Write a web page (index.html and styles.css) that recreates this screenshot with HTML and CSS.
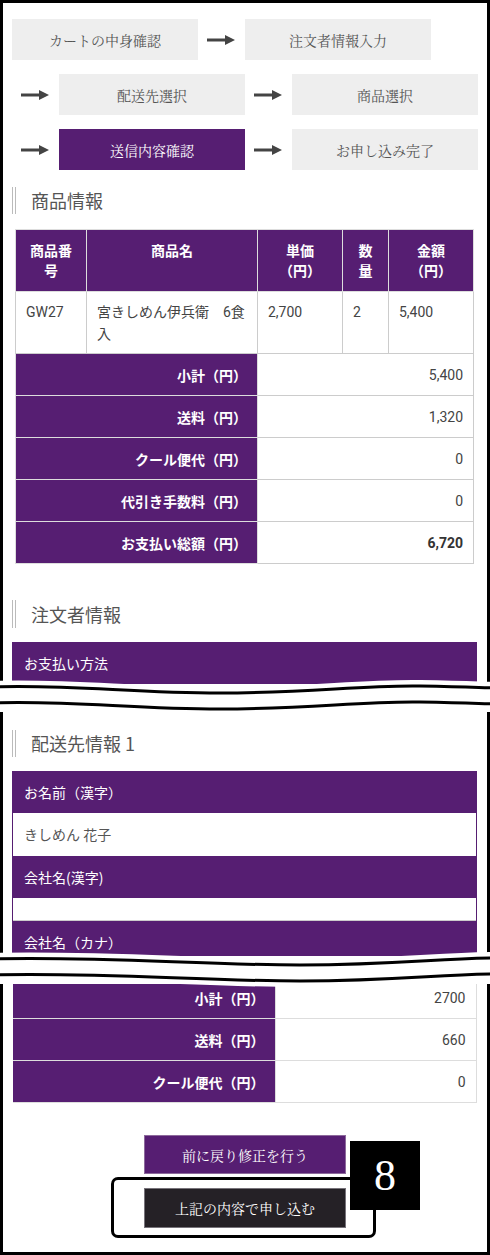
FILE: index.html
```html
<!DOCTYPE html>
<html lang="ja">
<head>
<meta charset="utf-8">
<title>送信内容確認</title>
<link rel="stylesheet" href="styles.css">
</head>
<body>
<div class="page">
  <section class="panel panel-top">
    <div class="steps">
      <div class="steps-row">
        <div class="step">カートの中身確認</div>
        <svg class="arrow" viewBox="0 0 28 12"><path d="M0 6H19" stroke="#444" stroke-width="3"/><path d="M18 1L28 6L18 11Z" fill="#444"/></svg>
        <div class="step">注文者情報入力</div>
      </div>
      <div class="steps-row">
        <svg class="arrow" viewBox="0 0 28 12"><path d="M0 6H19" stroke="#444" stroke-width="3"/><path d="M18 1L28 6L18 11Z" fill="#444"/></svg>
        <div class="step">配送先選択</div>
        <svg class="arrow" viewBox="0 0 28 12"><path d="M0 6H19" stroke="#444" stroke-width="3"/><path d="M18 1L28 6L18 11Z" fill="#444"/></svg>
        <div class="step">商品選択</div>
      </div>
      <div class="steps-row">
        <svg class="arrow" viewBox="0 0 28 12"><path d="M0 6H19" stroke="#444" stroke-width="3"/><path d="M18 1L28 6L18 11Z" fill="#444"/></svg>
        <div class="step step-current">送信内容確認</div>
        <svg class="arrow" viewBox="0 0 28 12"><path d="M0 6H19" stroke="#444" stroke-width="3"/><path d="M18 1L28 6L18 11Z" fill="#444"/></svg>
        <div class="step">お申し込み完了</div>
      </div>
    </div>

    <h2 class="heading heading-first">商品情報</h2>
    <table class="items">
      <colgroup><col class="c1"><col class="c2"><col class="c3"><col class="c4"><col class="c5"></colgroup>
      <thead>
        <tr><th>商品番号</th><th>商品名</th><th>単価（円）</th><th>数量</th><th>金額（円）</th></tr>
      </thead>
      <tbody>
        <tr class="data"><td>GW27</td><td>宮きしめん伊兵衛　6食入</td><td>2,700</td><td>2</td><td>5,400</td></tr>
        <tr class="sum"><th colspan="2">小計（円）</th><td colspan="3">5,400</td></tr>
        <tr class="sum"><th colspan="2">送料（円）</th><td colspan="3">1,320</td></tr>
        <tr class="sum"><th colspan="2">クール便代（円）</th><td colspan="3">0</td></tr>
        <tr class="sum"><th colspan="2">代引き手数料（円）</th><td colspan="3">0</td></tr>
        <tr class="sum"><th colspan="2">お支払い総額（円）</th><td colspan="3" class="total">6,720</td></tr>
      </tbody>
    </table>

    <h2 class="heading heading-second">注文者情報</h2>
    <div class="bar">お支払い方法</div>
  </section>

  <svg class="break" viewBox="0 0 490 44" width="490" height="44">
    <path d="M-10,19 C70,16 130,25 220,25 S360,17 420,18 S480,20 500,20" stroke="#fff" stroke-width="28" fill="none"/>
    <path d="M-10,11 C70,8 130,17 220,17 S360,9 420,10 S480,12 500,12" stroke="#000" stroke-width="3" fill="none"/>
    <path d="M-10,27 C70,24 130,33 220,33 S360,25 420,26 S480,28 500,28" stroke="#000" stroke-width="3" fill="none"/>
  </svg>

  <section class="panel panel-mid">
    <h2 class="heading">配送先情報 1</h2>
    <div class="form">
      <div class="form-label">お名前（漢字）</div>
      <div class="form-value">きしめん 花子</div>
      <div class="form-label">会社名(漢字)</div>
      <div class="form-value form-empty"></div>
      <div class="form-label">会社名（カナ）</div>
    </div>
  </section>

  <svg class="break" viewBox="0 0 490 44" width="490" height="44">
    <path d="M-10,19 C100,16 200,25 300,25 S440,18 500,18" stroke="#fff" stroke-width="28" fill="none"/>
    <path d="M-10,11 C100,8 200,17 300,17 S440,10 500,10" stroke="#000" stroke-width="3" fill="none"/>
    <path d="M-10,27 C100,24 200,33 300,33 S440,26 500,26" stroke="#000" stroke-width="3" fill="none"/>
  </svg>

  <section class="panel panel-bottom">
    <table class="totals">
      <colgroup><col class="t1"><col class="t2"></colgroup>
      <tbody>
        <tr><th>小計（円）</th><td>2700</td></tr>
        <tr><th>送料（円）</th><td>660</td></tr>
        <tr><th>クール便代（円）</th><td>0</td></tr>
      </tbody>
    </table>
    <div class="actions">
      <div class="btn btn-back">前に戻り修正を行う</div>
      <div class="btn btn-submit">上記の内容で申し込む</div>
    </div>
    <div class="callout"></div>
    <div class="badge">8</div>
  </section>
</div>
</body>
</html>
```

FILE: styles.css
```css
body {
  margin: 0;
  background: #fff;
  font-family: Roboto, "Noto Sans CJK JP", sans-serif;
  font-size: 14px;
  color: #444;
  text-spacing-trim: space-all;
}

.page {
  width: 490px;
}

.panel {
  box-sizing: border-box;
  border-left: 3px solid #000;
  border-right: 3px solid #000;
  padding: 0 9px;
  overflow: hidden;
}

.panel-top {
  height: 684px;
  border-top: 3px solid #000;
  padding-top: 16px;
}

.panel-mid {
  height: 244px;
  padding-top: 18px;
}

.panel-bottom {
  height: 271px;
  border-bottom: 3px solid #000;
  position: relative;
}

/* steps */
.steps {
  display: flex;
  flex-direction: column;
  gap: 14px;
}

.steps-row {
  display: flex;
  align-items: center;
}

.step {
  width: 186px;
  height: 41px;
  flex: none;
  background: #eee;
  color: #555;
  display: flex;
  align-items: center;
  justify-content: center;
  font-family: "Noto Serif CJK JP", "Noto Sans CJK JP", serif;
  font-size: 14px;
}

.step-current {
  background: #561e72;
  color: #fff;
}

.arrow {
  width: 28px;
  height: 12px;
  flex: none;
  margin: 0 10px 0 9px;
}

/* headings */
.heading {
  margin: 0 0 14px;
  border-left: 4px double #bbb;
  padding-left: 15px;
  font-family: "Noto Sans CJK JP", sans-serif;
  font-size: 18px;
  font-weight: normal;
  line-height: 27px;
  color: #555;
}

.heading-first {
  margin-top: 17px;
  margin-bottom: 15px;
}

.heading-second {
  margin-top: 36px;
  margin-bottom: 14px;
  line-height: 28px;
}

/* items table */
.items {
  margin-left: 3px;
  width: 458px;
  border-collapse: collapse;
  table-layout: fixed;
}

.c1 { width: 71px; }
.c2 { width: 171px; }
.c3 { width: 85px; }
.c4 { width: 46px; }
.c5 { width: 85px; }

.items th {
  background: #561e72;
  color: #fff;
  font-family: "Noto Sans CJK JP", sans-serif;
  font-weight: bold;
  font-size: 14px;
  border: 1px solid #ddd;
}

.items thead th {
  padding: 10px 10px 11px;
  line-height: 20px;
  text-align: center;
  vertical-align: top;
}

.items td {
  border: 1px solid #ccc;
  color: #444;
}

.items .data td {
  padding: 9px 10px 8px;
  line-height: 22px;
  vertical-align: top;
  text-align: left;
}

.items .sum th,
.items .sum td {
  padding: 10px 10px 9px;
  line-height: 22px;
  text-align: right;
}

.items .total {
  font-weight: bold;
  color: #333;
}

.bar {
  width: 465px;
  height: 50px;
  box-sizing: border-box;
  background: #561e72;
  color: #fff;
  padding-left: 12px;
  line-height: 42px;
  font-family: "Noto Sans CJK JP", sans-serif;
}

/* form */
.form {
  width: 465px;
  box-sizing: border-box;
  border-left: 1px solid #561e72;
  border-right: 1px solid #561e72;
  font-family: "Noto Sans CJK JP", sans-serif;
}

.form-label {
  height: 42px;
  line-height: 42px;
  background: #561e72;
  color: #fff;
  padding-left: 11px;
}

.form-value {
  height: 43px;
  line-height: 43px;
  padding-left: 11px;
  color: #555;
  background: #fff;
}

.form-empty {
  height: 22px;
  border-bottom: 1px solid #ccc;
}

/* break */
.break {
  display: block;
  position: relative;
  z-index: 2;
  margin: -8px 0;
}

/* totals */
.totals {
  margin: -8px 0 0 1px;
  width: 463px;
  border-collapse: collapse;
  table-layout: fixed;
}

.t1 { width: 262px; }
.t2 { width: 201px; }

.totals th,
.totals td {
  height: 22px;
  padding: 10px 10px 9px;
  line-height: 22px;
  text-align: right;
}

.totals th {
  background: #561e72;
  color: #fff;
  font-family: "Noto Sans CJK JP", sans-serif;
  font-weight: bold;
  border: 1px solid #ddd;
  border-left: none;
}

.totals td {
  border: 1px solid #ddd;
  color: #444;
}

/* actions */
.actions {
  display: flex;
  flex-direction: column;
  align-items: center;
  gap: 14px;
  margin-top: 32px;
}

.btn {
  width: 202px;
  height: 39px;
  box-sizing: border-box;
  display: flex;
  align-items: center;
  justify-content: center;
  color: #fff;
  font-family: "Noto Serif CJK JP", "Noto Sans CJK JP", serif;
  font-size: 14px;
}

.btn-back {
  background: #561e72;
  border: 1px solid #8d6a9c;
}

.btn-submit {
  height: 40px;
  background: #252126;
  border: 1px solid #77737a;
}

/* annotation overlay */
.callout {
  position: absolute;
  left: 108px;
  top: 193px;
  width: 265px;
  height: 61px;
  box-sizing: border-box;
  border: 3px solid #000;
  border-radius: 7px;
}

.badge {
  position: absolute;
  left: 347px;
  top: 157px;
  width: 70px;
  height: 69px;
  background: #000;
  color: #fff;
  font-family: "Liberation Serif", serif;
  font-size: 44px;
  display: flex;
  align-items: center;
  justify-content: center;
  z-index: 1;
}
```
